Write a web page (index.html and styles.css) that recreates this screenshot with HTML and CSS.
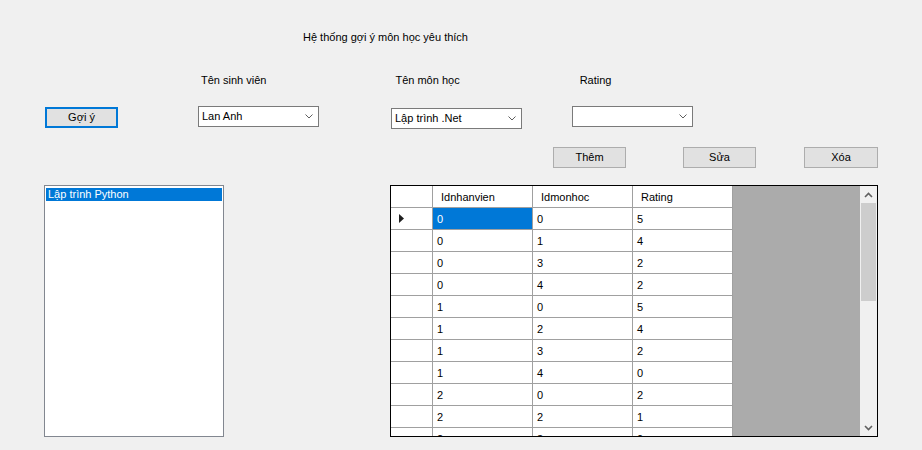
FILE: index.html
```html
<!DOCTYPE html>
<html lang="vi">
<head>
<meta charset="utf-8">
<title>Hệ thống gợi ý môn học yêu thích</title>
<link rel="stylesheet" href="styles.css">
</head>
<body>
<div class="form">
  <div class="title">Hệ thống gợi ý môn học yêu thích</div>

  <div class="labels">
    <span class="lbl lbl-sv">Tên sinh viên</span>
    <span class="lbl lbl-mh">Tên môn học</span>
    <span class="lbl lbl-rt">Rating</span>
  </div>

  <div class="controls">
    <button class="btn btn-focus btn-goiy">Gợi ý</button>
    <div class="combo combo-sv"><span class="combo-text">Lan Anh</span><svg class="chev" width="8" height="5" viewBox="0 0 8 5"><path d="M0.5 0.5 L4 4 L7.5 0.5" fill="none" stroke="#5f5f5f" stroke-width="1"/></svg></div>
    <div class="combo combo-mh"><span class="combo-text">Lập trình .Net</span><svg class="chev" width="8" height="5" viewBox="0 0 8 5"><path d="M0.5 0.5 L4 4 L7.5 0.5" fill="none" stroke="#5f5f5f" stroke-width="1"/></svg></div>
    <div class="combo combo-rt"><span class="combo-text"></span><svg class="chev" width="8" height="5" viewBox="0 0 8 5"><path d="M0.5 0.5 L4 4 L7.5 0.5" fill="none" stroke="#5f5f5f" stroke-width="1"/></svg></div>
  </div>

  <div class="actions">
    <button class="btn btn-them">Thêm</button>
    <button class="btn btn-sua">Sửa</button>
    <button class="btn btn-xoa">Xóa</button>
  </div>

  <div class="main">
    <div class="listbox">
      <div class="list-item selected">Lập trình Python</div>
    </div>

    <div class="dgv">
      <div class="dgv-body">
        <div class="dgv-grid">
          <div class="cell hdr rowhdr"></div>
          <div class="cell hdr">Idnhanvien</div>
          <div class="cell hdr">Idmonhoc</div>
          <div class="cell hdr">Rating</div>

          <div class="cell rowhdr"><svg width="6" height="9" viewBox="0 0 6 9"><path d="M0 0 L5 4.5 L0 9 Z" fill="#1f1f1f"/></svg></div>
          <div class="cell sel">0</div><div class="cell">0</div><div class="cell">5</div>

          <div class="cell rowhdr"></div><div class="cell">0</div><div class="cell">1</div><div class="cell">4</div>
          <div class="cell rowhdr"></div><div class="cell">0</div><div class="cell">3</div><div class="cell">2</div>
          <div class="cell rowhdr"></div><div class="cell">0</div><div class="cell">4</div><div class="cell">2</div>
          <div class="cell rowhdr"></div><div class="cell">1</div><div class="cell">0</div><div class="cell">5</div>
          <div class="cell rowhdr"></div><div class="cell">1</div><div class="cell">2</div><div class="cell">4</div>
          <div class="cell rowhdr"></div><div class="cell">1</div><div class="cell">3</div><div class="cell">2</div>
          <div class="cell rowhdr"></div><div class="cell">1</div><div class="cell">4</div><div class="cell">0</div>
          <div class="cell rowhdr"></div><div class="cell">2</div><div class="cell">0</div><div class="cell">2</div>
          <div class="cell rowhdr"></div><div class="cell">2</div><div class="cell">2</div><div class="cell">1</div>
          <div class="cell rowhdr"></div><div class="cell">2</div><div class="cell">3</div><div class="cell">0</div>
        </div>
      </div>
      <div class="vscroll">
        <div class="sb-btn"><svg width="9" height="6" viewBox="0 0 9 6"><path d="M1 5 L4.5 1.5 L8 5" fill="none" stroke="#606060" stroke-width="1.6"/></svg></div>
        <div class="sb-thumb"></div>
        <div class="sb-space"></div>
        <div class="sb-btn"><svg width="9" height="6" viewBox="0 0 9 6"><path d="M1 1 L4.5 4.5 L8 1" fill="none" stroke="#606060" stroke-width="1.6"/></svg></div>
      </div>
    </div>
  </div>
</div>
</body>
</html>
```
FILE: styles.css
```css
* { box-sizing: border-box; }

html, body {
  margin: 0;
  padding: 0;
}

body {
  width: 922px;
  height: 450px;
  overflow: hidden;
  background: #f0f0f0;
  color: #000;
  font-family: "Liberation Sans", Arial, sans-serif;
  font-size: 11px;
  line-height: 13px;
}

.form {
  padding-top: 31px;
}

.title {
  margin-left: 303px;
  height: 13px;
}

.labels {
  display: flex;
  margin-top: 30px;
  height: 13px;
}

.lbl-sv { margin-left: 201px; }
.lbl-mh { margin-left: 129px; }
.lbl-rt { margin-left: 120px; }

.controls {
  display: flex;
  align-items: flex-start;
  margin-top: 19px;
  height: 23px;
}

.btn {
  display: flex;
  align-items: center;
  justify-content: center;
  width: 73px;
  height: 21px;
  padding: 0 0 1px 0;
  margin: 0;
  border: 1px solid #adadad;
  background: #e1e1e1;
  font-family: inherit;
  font-size: 11px;
  line-height: 13px;
  color: #000;
}

.btn-focus {
  border: 2px solid #0078d7;
}

.btn-goiy {
  margin-left: 45px;
  margin-top: 1px;
}

.combo {
  display: flex;
  align-items: center;
  height: 21px;
  border: 1px solid #7a7a7a;
  background: #fff;
  padding: 0 5px 1px 3px;
}

.combo-text {
  flex: 1;
  white-space: nowrap;
}

.chev {
  display: block;
  margin-top: 1px;
}

.combo-sv { margin-left: 80px; width: 121px; }
.combo-mh { margin-left: 72px; width: 131px; margin-top: 2px; }
.combo-rt { margin-left: 50px; width: 121px; }

.actions {
  display: flex;
  margin-top: 18px;
  height: 21px;
}

.btn-them { margin-left: 553px; }
.btn-sua { margin-left: 57px; }
.btn-xoa { margin-left: 48px; width: 74px; }

.main {
  display: flex;
  align-items: flex-start;
  margin-top: 17px;
}

.listbox {
  margin-left: 44px;
  width: 180px;
  height: 252px;
  border: 1px solid #828790;
  background: #fff;
  padding: 2px 1px;
}

.list-item {
  height: 13px;
  padding-left: 2px;
  white-space: nowrap;
}

.list-item.selected {
  background: #0078d7;
  color: #fff;
}

.dgv {
  margin-left: 166px;
  width: 488px;
  height: 252px;
  border: 1px solid #000;
  background: #ababab;
  display: flex;
  overflow: hidden;
}

.dgv-body {
  flex: 1;
  overflow: hidden;
}

.dgv-grid {
  display: grid;
  grid-template-columns: 42px 100px 100px 100px;
  grid-auto-rows: 22px;
  width: 342px;
}

.cell {
  display: flex;
  align-items: center;
  height: 22px;
  padding: 2px 0 0 4px;
  background: #fff;
  border-right: 1px solid #a0a0a0;
  border-bottom: 1px solid #a0a0a0;
  white-space: nowrap;
}

.cell.hdr {
  padding-left: 8px;
}

.cell.rowhdr {
  padding-left: 8px;
  padding-top: 0;
}

.cell.sel {
  background: #0078d7;
  color: #fff;
}

.vscroll {
  width: 17px;
  height: 100%;
  background: #f0f0f0;
  display: flex;
  flex-direction: column;
}

.sb-btn {
  height: 17px;
  display: flex;
  align-items: center;
  justify-content: center;
}

.sb-thumb {
  height: 98px;
  margin: 0 1px;
  background: #cdcdcd;
}

.sb-space {
  flex: 1;
}
```
